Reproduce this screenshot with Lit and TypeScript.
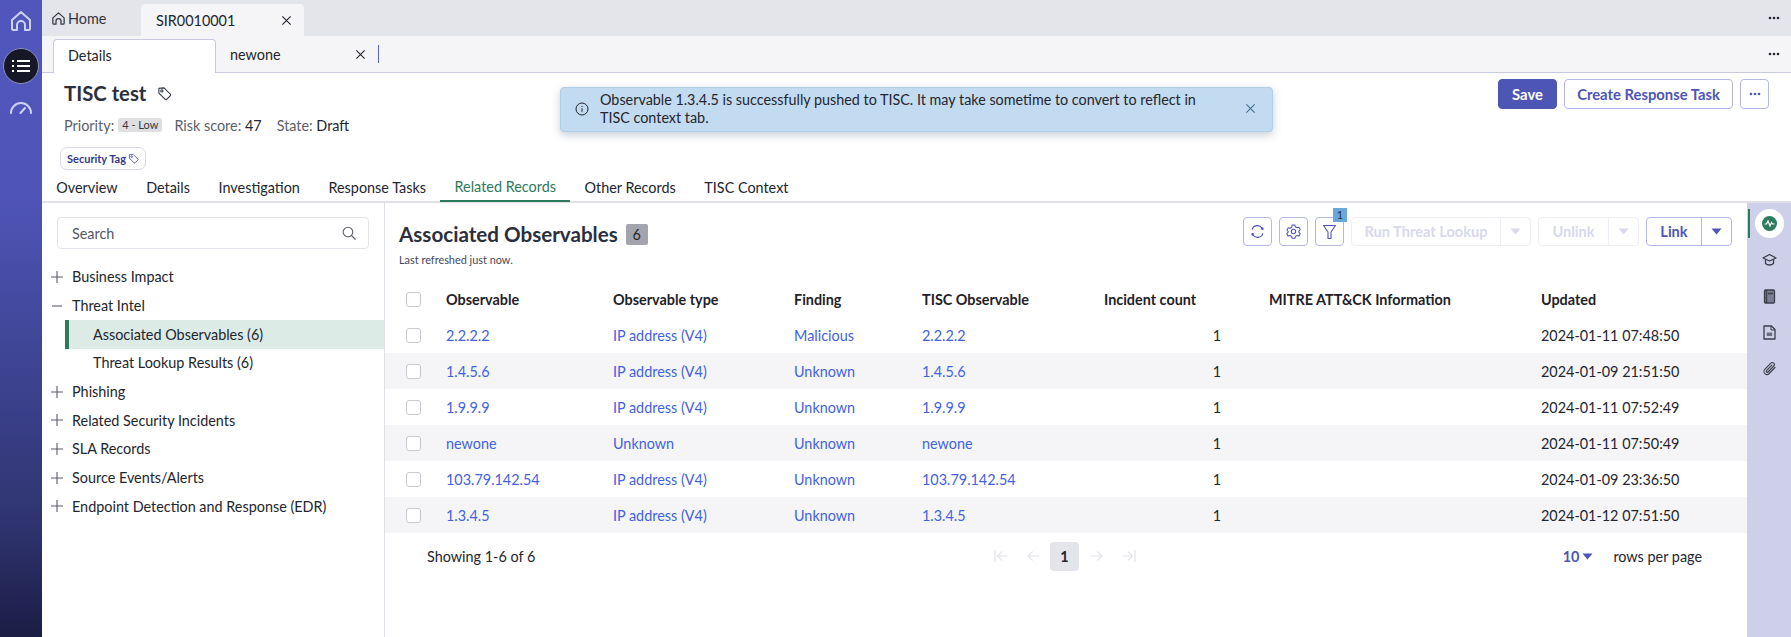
import { LitElement, css, html } from 'lit';
import { customElement } from 'lit/decorators.js';

const homeIcon = (size: number) => html`<svg width=${size} height=${size} viewBox="0 0 24 24" fill="none" stroke="currentColor" stroke-width="2" stroke-linejoin="round">
  <path d="M3 11 12 3l9 8v8.500a1.500 1.500 0 0 1-1.500 1.500H16v-5a4 4 0 0 0-8 0v5H4.500A1.500 1.500 0 0 1 3 19.500Z" />
</svg>`;

const closeIcon = (size = 11) => html`<svg width=${size} height=${size} viewBox="0 0 12 12" fill="none" stroke="currentColor" stroke-width="1.200">
  <path d="M1.500 1.500l9 9M10.500 1.500l-9 9" />
</svg>`;

const tagIcon = (size: number) => html`<svg width=${size} height=${size} viewBox="0 0 16 16" fill="none" stroke="currentColor" stroke-width="1.100" stroke-linejoin="round">
  <path d="M2 2.500 7.500 2 14.300 8.800a1 1 0 0 1 0 1.400l-4.100 4.100a1 1 0 0 1-1.400 0L2 7.500Z" />
  <circle cx="5.200" cy="5.200" r="1.200" />
</svg>`;

const dots = html`<svg width="12" height="4" viewBox="0 0 12 4" fill="currentColor">
  <circle cx="2" cy="2" r="1.300" /><circle cx="6" cy="2" r="1.300" /><circle cx="10" cy="2" r="1.300" />
</svg>`;

const caret = html`<svg width="11" height="7" viewBox="0 0 11 7" fill="currentColor"><path d="M0.500 0.500h10L5.500 6.500Z" /></svg>`;

const plusIcon = html`<svg width="12" height="12" viewBox="0 0 12 12" stroke="#5a5d68" stroke-width="1.100"><path d="M0 6h12M6 0v12" /></svg>`;
const minusIcon = html`<svg width="12" height="12" viewBox="0 0 12 12" stroke="#5a5d68" stroke-width="1.100"><path d="M1 6h10" /></svg>`;

const arrows = [
  'M2 2v12M14 8H5M9 3.500 4.500 8 9 12.500',
  'M14 8H3M7.500 3.500 3 8l4.500 4.500',
  'M2 8h11M8.500 3.500 13 8l-4.500 4.500',
  'M14 2v12M2 8h9M7 3.500 11.500 8 7 12.500',
];

const treeItems = [
  { label: 'Business Impact', icon: plusIcon },
  { label: 'Threat Intel', icon: minusIcon },
  { label: 'Associated Observables (6)', sub: true, active: true },
  { label: 'Threat Lookup Results (6)', sub: true },
  { label: 'Phishing', icon: plusIcon },
  { label: 'Related Security Incidents', icon: plusIcon },
  { label: 'SLA Records', icon: plusIcon },
  { label: 'Source Events/Alerts', icon: plusIcon },
  { label: 'Endpoint Detection and Response (EDR)', icon: plusIcon },
];

const rows = [
  ['2.2.2.2', 'IP address (V4)', 'Malicious', '2024-01-11 07:48:50'],
  ['1.4.5.6', 'IP address (V4)', 'Unknown', '2024-01-09 21:51:50'],
  ['1.9.9.9', 'IP address (V4)', 'Unknown', '2024-01-11 07:52:49'],
  ['newone', 'Unknown', 'Unknown', '2024-01-11 07:50:49'],
  ['103.79.142.54', 'IP address (V4)', 'Unknown', '2024-01-09 23:36:50'],
  ['1.3.4.5', 'IP address (V4)', 'Unknown', '2024-01-12 07:51:50'],
];

const recordTabs = ['Overview', 'Details', 'Investigation', 'Response Tasks', 'Related Records', 'Other Records', 'TISC Context'];

@customElement('app-root')
export class AppRoot extends LitElement {
  static styles = css`
    :host {
      display: flex;
      height: 100vh;
      width: 100%;
      overflow: hidden;
      font-family: Lato, 'Noto Sans', sans-serif;
      font-size: 14.400px;
      color: #23262f;
      background: #fff;
    }
    .nav {
      width: 42px;
      flex: none;
      display: flex;
      flex-direction: column;
      align-items: center;
      background: linear-gradient(180deg, #5056bc 0%, #4f55b8 30%, #2f3470 82%, #1b1d44 100%);
      color: #cfd2ee;
      padding-top: 9px;
      box-sizing: border-box;
    }
    .nav-list {
      width: 36px;
      height: 36px;
      margin: 15px 0 15px;
      border-radius: 50%;
      background: #171827;
      border: 1px solid #8d90c4;
      box-sizing: border-box;
      display: flex;
      align-items: center;
      justify-content: center;
      color: #fff;
    }
    .page {
      flex: 1;
      min-width: 0;
      display: flex;
      flex-direction: column;
      position: relative;
    }
    .tabbar {
      height: 36px;
      flex: none;
      display: flex;
      align-items: flex-end;
      background: #e4e5ea;
      position: relative;
    }
    .home {
      width: 99px;
      height: 36px;
      display: flex;
      align-items: center;
      gap: 2px;
      padding-left: 9px;
      box-sizing: border-box;
      color: #33363f;
    }
    .doc-tab {
      width: 163px;
      height: 32px;
      display: flex;
      align-items: center;
      justify-content: space-between;
      padding: 0 12px 0 15px;
      box-sizing: border-box;
      background: #f5f5f8;
      border-radius: 4px 4px 0 0;
    }
    .more-abs {
      margin-left: auto;
      align-self: center;
      margin-right: 11px;
      display: flex;
      color: #23262f;
    }
    .subbar {
      height: 37px;
      flex: none;
      display: flex;
      align-items: flex-end;
      padding-left: 11px;
      background: #f5f5f8;
      border-bottom: 1px solid #c8c9dc;
      box-sizing: border-box;
    }
    .sub-active {
      width: 163px;
      height: 34px;
      margin-bottom: -1px;
      display: flex;
      align-items: center;
      padding: 0 0 2px 14px;
      box-sizing: border-box;
      background: #fff;
      border: 1px solid #c8c9dc;
      border-bottom: none;
      border-radius: 4px 4px 0 0;
    }
    .sub-tab {
      width: 162px;
      height: 33px;
      display: flex;
      align-items: center;
      justify-content: space-between;
      padding: 0 12px 2px 14px;
      box-sizing: border-box;
    }
    .sub-sep {
      width: 1px;
      height: 18px;
      background: #5a60c0;
      align-self: center;
    }
    .record {
      height: 130px;
      flex: none;
      box-sizing: border-box;
      display: flex;
      flex-direction: column;
      border-bottom: 2px solid #e0e0e6;
    }
    .record-top {
      display: flex;
      justify-content: space-between;
      padding: 5px 22px 0 22px;
    }
    .title-row {
      height: 30px;
      display: flex;
      align-items: center;
      gap: 11px;
      color: #2a2f3d;
    }
    h1 {
      margin: 0;
      font-size: 20.300px;
      font-weight: 700;
      color: #2a2f3d;
    }
    .meta {
      margin-top: 7px;
      height: 20px;
      display: flex;
      align-items: center;
      color: #5c5f6b;
    }
    .meta b {
      font-weight: 400;
      color: #23262f;
    }
    .prio {
      margin: 0 12px 0 4px;
      padding: 0 4px;
      height: 14px;
      line-height: 14px;
      font-size: 11px;
      color: #33363f;
      background: #dfdfe1;
      border-radius: 2px;
    }
    .state {
      margin-left: 15px;
    }
    .chip {
      margin: 12px 0 0 -4px;
      width: 86px;
      height: 23px;
      box-sizing: border-box;
      display: flex;
      align-items: center;
      justify-content: center;
      gap: 2px;
      font-size: 11px;
      font-weight: 700;
      color: #353a8c;
      border: 1px solid #d9d9e6;
      border-radius: 7px;
    }
    .actions {
      display: flex;
      gap: 7px;
      padding-top: 1px;
    }
    .btn {
      height: 30px;
      box-sizing: border-box;
      display: flex;
      align-items: center;
      justify-content: center;
      font-weight: 700;
      font-size: 14.800px;
      color: #4d55b5;
      background: #fff;
      border: 1px solid #b5b8e2;
      border-radius: 4px;
    }
    .save {
      width: 59px;
      background: #4d55b5;
      border-color: #4d55b5;
      color: #fff;
    }
    .create {
      width: 169px;
    }
    .more {
      width: 29px;
    }
    .record-tabs {
      display: flex;
      margin-top: 3px;
      height: 30px;
      padding-left: 0;
    }
    .record-tabs div {
      padding: 0 14.300px;
      display: flex;
      align-items: center;
      margin-bottom: -1px;
      box-sizing: border-box;
      white-space: nowrap;
    }
    .record-tabs .on {
      color: #2d7a5c;
      border-bottom: 2px solid #2d7a5c;
    }
    .toast {
      position: absolute;
      left: 518px;
      top: 87px;
      width: 713px;
      height: 45px;
      box-sizing: border-box;
      padding: 3px 0 0 39px;
      background: #c3dbf0;
      border: 1px solid #afcfe9;
      border-radius: 4px;
      box-shadow: 0 3px 8px rgba(40, 60, 90, 0.25);
      font-size: 14.350px;
      line-height: 18px;
      color: #23262f;
    }
    .toast-info {
      position: absolute;
      left: 14px;
      top: 14px;
      display: flex;
    }
    .toast-close {
      position: absolute;
      right: 16px;
      top: 15px;
      display: flex;
      color: #3f6f9e;
    }
    .body {
      flex: 1;
      min-height: 0;
      display: flex;
    }
    .side {
      width: 343px;
      flex: none;
      box-sizing: border-box;
      border-right: 1px solid #dedee5;
      padding-top: 14px;
    }
    .search {
      margin: 0 15px;
      height: 32px;
      box-sizing: border-box;
      display: flex;
      align-items: center;
      justify-content: space-between;
      padding: 0 12px 0 14px;
      border: 1px solid #e4e4ec;
      border-radius: 4px;
      color: #555868;
    }
    .tree {
      margin-top: 13.500px;
    }
    .node {
      height: 28.700px;
      display: flex;
      align-items: center;
      gap: 9px;
      padding-left: 9px;
      box-sizing: border-box;
    }
    .node.sub {
      margin-left: 23px;
      padding-left: 28px;
    }
    .node.on {
      background: #dcebe5;
      border-left: 4px solid #2d7a5c;
      padding-left: 24px;
    }
    .main {
      flex: 1;
      min-width: 0;
      display: flex;
      flex-direction: column;
    }
    .main-head {
      display: flex;
      justify-content: space-between;
      padding: 14px 15px 0 14px;
      height: 50px;
      box-sizing: border-box;
    }
    .main-title {
      display: flex;
      align-items: center;
      gap: 8px;
      height: 34px;
    }
    h2 {
      margin: 0;
      font-size: 20.600px;
      font-weight: 700;
      color: #2a2f3d;
    }
    .count {
      width: 22px;
      height: 21px;
      line-height: 21px;
      text-align: center;
      background: #a3a4ad;
      border-radius: 2px;
    }
    .tools {
      display: flex;
      gap: 7px;
    }
    .tool {
      width: 29px;
      height: 29px;
      box-sizing: border-box;
      display: flex;
      align-items: center;
      justify-content: center;
      color: #4d55b5;
      border: 1px solid #b5b8e2;
      border-radius: 4px;
      position: relative;
    }
    .badge {
      position: absolute;
      right: -4px;
      top: -10px;
      width: 14px;
      height: 14px;
      line-height: 14px;
      text-align: center;
      font-size: 11px;
      color: #23303f;
      background: #6aa8dc;
    }
    .split {
      height: 29px;
      box-sizing: border-box;
      display: flex;
      border: 1px solid #b5b8e2;
      border-radius: 4px;
      color: #4d55b5;
      font-weight: 700;
      font-size: 14.600px;
    }
    .split.off {
      border-color: #eeeef6;
      color: #d8d9ee;
    }
    .split span {
      display: flex;
      align-items: center;
      justify-content: center;
    }
    .split .arrow {
      width: 29px;
      border-left: 1px solid #b5b8e2;
    }
    .split.off .arrow {
      border-left-color: #eeeef6;
    }
    .run {
      width: 148px;
    }
    .unlink {
      width: 69px;
    }
    .linkb {
      width: 54px;
    }
    .stamp {
      padding-left: 14px;
      font-size: 10.900px;
      color: #44475a;
      height: 18px;
      line-height: 16px;
      margin-top: -1px;
    }
    .row {
      display: grid;
      grid-template-columns: 61px 167px 181px 128px 182px 165px 272px 1fr;
      height: 36px;
      align-items: center;
    }
    .row.head {
      margin-top: 11px;
      font-weight: 700;
      color: #1f2128;
    }
    .row.alt {
      background: #f5f5f8;
    }
    .box {
      width: 15px;
      height: 15px;
      margin-left: 21px;
      box-sizing: border-box;
      background: #fff;
      border: 1px solid #c8c9d0;
      border-radius: 3px;
    }
    .link {
      color: #4262e2;
    }
    .num {
      text-align: right;
      padding-right: 48px;
    }
    .foot {
      height: 36px;
      margin-top: 5px;
      display: grid;
      grid-template-columns: 1fr auto 1fr;
      align-items: center;
      padding: 0 45px 0 42px;
    }
    .pager {
      display: flex;
      align-items: center;
      color: #e2e2e8;
    }
    .pager svg {
      margin: 0 8px;
    }
    .cur {
      width: 29px;
      height: 29px;
      margin: 0 1.500px;
      line-height: 29px;
      text-align: center;
      font-weight: 700;
      color: #23262f;
      background: #e4e5ea;
      border-radius: 4px;
    }
    .per {
      display: flex;
      align-items: center;
      justify-content: flex-end;
    }
    .per .size {
      display: flex;
      align-items: center;
      gap: 3px;
      margin-right: 20px;
      color: #4d55b5;
      font-weight: 700;
    }
    .rail {
      width: 44px;
      flex: none;
      position: relative;
      display: flex;
      flex-direction: column;
      align-items: center;
      gap: 16px;
      padding: 6px 0 0 0;
      box-sizing: border-box;
      background: #ced0ea;
      color: #3a3d4a;
    }
    .rail-on {
      width: 29px;
      height: 29px;
      margin-bottom: -4px;
      border-radius: 50%;
      background: #fff;
      display: flex;
      align-items: center;
      justify-content: center;
    }
    .rail-mark {
      position: absolute;
      left: 1px;
      top: 6px;
      width: 2px;
      height: 29px;
      background: #2d7a5c;
    }
    .rail-icon {
      height: 20px;
      display: flex;
      align-items: center;
    }
  `;

  render() {
    return html`
      <nav class="nav">
        ${homeIcon(24)}
        <div class="nav-list">
          <svg width="18" height="14" viewBox="0 0 18 14" fill="none" stroke="currentColor" stroke-width="2">
            <path d="M0 2h2M5 2h13M0 7h2M5 7h13M0 12h2M5 12h13" />
          </svg>
        </div>
        <svg width="24" height="16" viewBox="0 0 24 16" fill="none" stroke="currentColor" stroke-width="2" stroke-linecap="round">
          <path d="M2 14a10 10 0 0 1 20 0M11.500 14l4.500-5" />
        </svg>
      </nav>
      <div class="page">
        <div class="tabbar">
          <div class="home">${homeIcon(15)}<span>Home</span></div>
          <div class="doc-tab"><span>SIR0010001</span>${closeIcon()}</div>
          <div class="more-abs">${dots}</div>
        </div>
        <div class="subbar">
          <div class="sub-active">Details</div>
          <div class="sub-tab"><span>newone</span>${closeIcon()}</div>
          <div class="sub-sep"></div>
          <div class="more-abs">${dots}</div>
        </div>
        <section class="record">
          <div class="record-top">
            <div>
              <div class="title-row"><h1>TISC test</h1>${tagIcon(15)}</div>
              <div class="meta">
                <span>Priority:</span><span class="prio">4 - Low</span>
                <span>Risk score:&nbsp;<b>47</b></span>
                <span class="state">State:&nbsp;<b>Draft</b></span>
              </div>
              <div class="chip">Security Tag ${tagIcon(11)}</div>
            </div>
            <div class="actions">
              <div class="btn save">Save</div>
              <div class="btn create">Create Response Task</div>
              <div class="btn more">${dots}</div>
            </div>
          </div>
          <div class="record-tabs">
            ${recordTabs.map((t) => html`<div class=${t === 'Related Records' ? 'on' : ''}>${t}</div>`)}
          </div>
        </section>
        <div class="toast">
          <span class="toast-info">
            <svg width="14" height="14" viewBox="0 0 14 14" fill="none" stroke="#23262f" stroke-width="1">
              <circle cx="7" cy="7" r="6" /><path d="M7 6.200v3.600M7 4v1" />
            </svg>
          </span>
          Observable 1.3.4.5 is successfully pushed to TISC. It may take sometime to convert to reflect in<br />TISC context tab.
          <span class="toast-close">${closeIcon()}</span>
        </div>
        <div class="body">
          <aside class="side">
            <div class="search">
              <span>Search</span>
              <svg width="14" height="14" viewBox="0 0 14 14" fill="none" stroke="#5a5d68" stroke-width="1.100">
                <circle cx="6" cy="6" r="4.800" /><path d="M9.500 9.500 13.500 13.500" />
              </svg>
            </div>
            <div class="tree">
              ${treeItems.map(
                (n) => html`<div class="node ${n.sub ? 'sub' : ''} ${n.active ? 'on' : ''}">
                  ${n.icon ?? ''}<span>${n.label}</span>
                </div>`,
              )}
            </div>
          </aside>
          <main class="main">
            <div class="main-head">
              <div class="main-title"><h2>Associated Observables</h2><span class="count">6</span></div>
              <div class="tools">
                <div class="tool">
                  <svg width="15" height="15" viewBox="0 0 16 16" fill="none" stroke="currentColor" stroke-width="1.200">
                    <path d="M2.200 6A6 6 0 0 1 13 4.500M13.800 10A6 6 0 0 1 3 11.500" />
                    <circle cx="13.200" cy="5" r="0.800" fill="currentColor" /><circle cx="2.800" cy="11" r="0.800" fill="currentColor" />
                  </svg>
                </div>
                <div class="tool">
                  <svg width="15" height="15" viewBox="0 0 16 16" fill="none" stroke="currentColor" stroke-width="1.100" stroke-linejoin="round">
                    <path d="M6.500 1.500h3l.5 2 1.800 1 2-.6 1.400 2.600-1.500 1.500v1.200l1.500 1.500-1.400 2.600-2-.6-1.800 1-.5 2h-3l-.5-2-1.800-1-2 .6-1.400-2.600 1.500-1.500V8.500L1 7l1.400-2.600 2 .6 1.800-1Z" transform="translate(0 -.5)" />
                    <circle cx="8" cy="8" r="2.300" />
                  </svg>
                </div>
                <div class="tool">
                  <svg width="15" height="16" viewBox="0 0 15 16" fill="none" stroke="currentColor" stroke-width="1.100" stroke-linejoin="round">
                    <path d="M1.500 1.500h12L9 8v6.500H6V8Z" />
                  </svg>
                  <span class="badge">1</span>
                </div>
                <div class="split off"><span class="run">Run Threat Lookup</span><span class="arrow">${caret}</span></div>
                <div class="split off"><span class="unlink">Unlink</span><span class="arrow">${caret}</span></div>
                <div class="split"><span class="linkb">Link</span><span class="arrow">${caret}</span></div>
              </div>
            </div>
            <div class="stamp">Last refreshed just now.</div>
            <div class="row head">
              <div class="box"></div>
              <div>Observable</div><div>Observable type</div><div>Finding</div><div>TISC Observable</div>
              <div>Incident count</div><div>MITRE ATT&amp;CK Information</div><div>Updated</div>
            </div>
            ${rows.map(
              (r, i) => html`<div class="row ${i % 2 ? 'alt' : ''}">
                <div class="box"></div>
                <div class="link">${r[0]}</div><div class="link">${r[1]}</div><div class="link">${r[2]}</div>
                <div class="link">${r[0]}</div><div class="num">1</div><div></div><div>${r[3]}</div>
              </div>`,
            )}
            <div class="foot">
              <div>Showing 1-6 of 6</div>
              <div class="pager">
                ${arrows.slice(0, 2).map((d) => html`<svg width="16" height="16" viewBox="0 0 16 16" fill="none" stroke="currentColor" stroke-width="1.100"><path d=${d} /></svg>`)}
                <div class="cur">1</div>
                ${arrows.slice(2).map((d) => html`<svg width="16" height="16" viewBox="0 0 16 16" fill="none" stroke="currentColor" stroke-width="1.100"><path d=${d} /></svg>`)}
              </div>
              <div class="per"><span class="size">10 ${caret}</span><span>rows per page</span></div>
            </div>
          </main>
          <aside class="rail">
            <span class="rail-mark"></span>
            <div class="rail-on">
              <svg width="15" height="15" viewBox="0 0 15 15">
                <circle cx="7.500" cy="7.500" r="7.500" fill="#2d7a5c" />
                <path d="M2.500 8h2l1.500-3 2 5 1.500-3.500 1 1.500h2" fill="none" stroke="#fff" stroke-width="1.200" />
              </svg>
            </div>
            <div class="rail-icon">
              <svg width="15" height="14" viewBox="0 0 15 14" fill="none" stroke="currentColor" stroke-width="1.300" stroke-linejoin="round">
                <path d="M7.500 1.500 14 5 7.500 8 1 5Z" /><path d="M3.500 6.500v4c2 2 6 2 8 0v-4" />
              </svg>
            </div>
            <div class="rail-icon">
              <svg width="13" height="15" viewBox="0 0 13 15" fill="#7c7e92" stroke="currentColor" stroke-width="1.300">
                <rect x="1.500" y="1" width="10" height="13" rx="1" /><path d="M3.500 1v13M5 4.500h5" />
              </svg>
            </div>
            <div class="rail-icon">
              <svg width="13" height="15" viewBox="0 0 13 15" fill="none" stroke="currentColor" stroke-width="1.300" stroke-linejoin="round">
                <path d="M1 1h7.500L12 4.500V14H1Z" /><path d="M8 1v4h4" stroke-width="1" /><rect x="3.800" y="7.500" width="5.400" height="3.500" fill="#6b6d80" stroke="none" />
              </svg>
            </div>
            <div class="rail-icon">
              <svg width="15" height="15" viewBox="0 0 15 15" fill="none" stroke="currentColor" stroke-width="1.100" stroke-linecap="round">
                <path d="M13 6.500 7.200 12.500a3 3 0 0 1-4.400-4.200L8.800 2.200a2 2 0 0 1 3 2.800L6 11a1 1 0 0 1-1.500-1.400L9.800 4.200" />
              </svg>
            </div>
          </aside>
        </div>
      </div>
    `;
  }
}
